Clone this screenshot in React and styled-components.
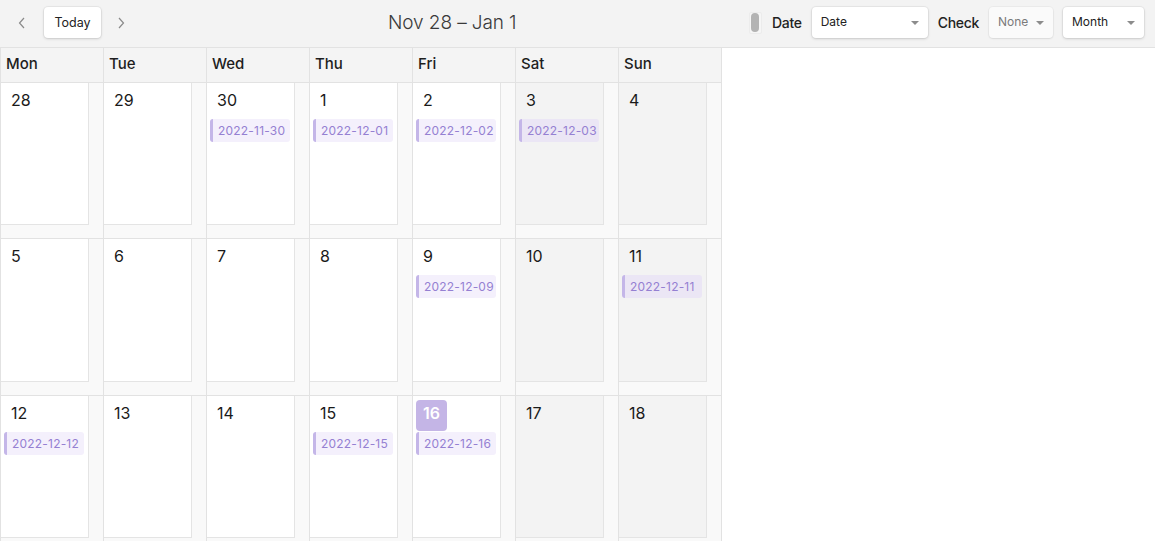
import React from 'react';
import styled, { createGlobalStyle } from 'styled-components';

const GlobalStyle = createGlobalStyle`
  html, body {
    margin: 0;
    padding: 0;
    background: #ffffff;
    font-family: Inter, "Noto Sans", "Liberation Sans", sans-serif;
    color: #1e1e1e;
  }
  body {
    height: 541px;
    overflow: hidden;
  }
`;

const weeks = [
  [
    { d: 28 }, { d: 29 }, { d: 30, ev: '2022-11-30' }, { d: 1, ev: '2022-12-01' },
    { d: 2, ev: '2022-12-02' }, { d: 3, ev: '2022-12-03' }, { d: 4 },
  ],
  [
    { d: 5 }, { d: 6 }, { d: 7 }, { d: 8 },
    { d: 9, ev: '2022-12-09' }, { d: 10 }, { d: 11, ev: '2022-12-11' },
  ],
  [
    { d: 12, ev: '2022-12-12' }, { d: 13 }, { d: 14 }, { d: 15, ev: '2022-12-15' },
    { d: 16, ev: '2022-12-16', today: true }, { d: 17 }, { d: 18 },
  ],
];

const dayNames = ['Mon', 'Tue', 'Wed', 'Thu', 'Fri', 'Sat', 'Sun'];

const App = () => (
  <>
    <GlobalStyle />
    <Page>
      <Toolbar>
        <Group>
          <ArrowBtn aria-label="prev">
            <svg width="8" height="12" viewBox="0 0 8 12">
              <path d="M6 1 L1.5 6 L6 11" fill="none" stroke="#8a8a8a" strokeWidth="1.2" />
            </svg>
          </ArrowBtn>
          <TodayBtn>Today</TodayBtn>
          <ArrowBtn aria-label="next">
            <svg width="8" height="12" viewBox="0 0 8 12">
              <path d="M2 1 L6.5 6 L2 11" fill="none" stroke="#8a8a8a" strokeWidth="1.2" />
            </svg>
          </ArrowBtn>
        </Group>
        <Title>Nov 28 – Jan 1</Title>
        <Group $right>
          <Toggle><span /></Toggle>
          <Label>Date</Label>
          <Select $w={116}>Date<Caret /></Select>
          <Label>Check</Label>
          <Select $w={64} $muted>None<Caret /></Select>
          <Select $w={81}>Month<Caret /></Select>
        </Group>
      </Toolbar>

      <Grid>
        {dayNames.map((n) => (
          <HeadCell key={n}>{n}</HeadCell>
        ))}
        {weeks.map((week, wi) =>
          week.map((day, di) => (
            <Cell key={`${wi}-${di}`}>
              <Frame $weekend={di >= 5}>
                <DayNum $today={day.today}>{day.d}</DayNum>
                {day.ev && <Event $weekend={di >= 5}>{day.ev}</Event>}
              </Frame>
            </Cell>
          ))
        )}
      </Grid>
    </Page>
  </>
);

export default App;

const Page = styled.div`
  width: 1155px;
  height: 541px;
  overflow: hidden;
`;

const Toolbar = styled.div`
  height: 48px;
  background: #f3f3f3;
  border-bottom: 1px solid #e2e2e2;
  display: flex;
  align-items: center;
  justify-content: space-between;
  padding: 0 11px 2px 10px;
  box-sizing: border-box;
`;

const Group = styled.div`
  display: flex;
  align-items: center;
  gap: ${(p) => (p.$right ? '10px' : '0')};
  width: ${(p) => (p.$right ? 'auto' : '378px')};
`;

const ArrowBtn = styled.button`
  border: none;
  background: transparent;
  width: 24px;
  height: 30px;
  display: flex;
  align-items: center;
  justify-content: center;
  padding: 0;
  margin-right: 10px;
  cursor: pointer;
`;

const TodayBtn = styled.button`
  height: 31px;
  width: 57px;
  margin-right: 8px;
  background: #ffffff;
  border: none;
  border-radius: 4px;
  box-shadow: 0 0 0 1px rgba(0, 0, 0, 0.04), 0 1px 3px rgba(0, 0, 0, 0.15);
  font-family: inherit;
  font-size: 12.5px;
  font-weight: 400;
  color: #222;
  padding: 0;
`;

const Title = styled.h2`
  margin: 0;
  font-size: 19px;
  font-weight: 300;
  color: #3a3a3a;
  flex: 1;
  letter-spacing: -0.1px;
`;

const Toggle = styled.span`
  width: 13px;
  height: 22px;
  box-sizing: border-box;
  border: 1px solid #ececec;
  background: #f6f6f6;
  border-radius: 2px;
  display: flex;
  align-items: center;
  justify-content: center;

  span {
    width: 8px;
    height: 19px;
    border-radius: 4px;
    background: #b3b3b3;
  }
`;

const Label = styled.span`
  font-size: 14px;
  font-weight: 500;
  color: #222;
  letter-spacing: -0.3px;
`;

const Select = styled.div`
  position: relative;
  width: ${(p) => p.$w}px;
  height: 31px;
  box-sizing: border-box;
  padding: 0 0 2px 9px;
  display: flex;
  align-items: center;
  font-size: 12px;
  font-weight: 400;
  color: ${(p) => (p.$muted ? '#7a7a7a' : '#222')};
  background: ${(p) => (p.$muted ? '#fafafa' : '#ffffff')};
  border-radius: 4px;
  box-shadow: ${(p) =>
    p.$muted
      ? '0 0 0 1px rgba(0,0,0,0.03), 0 1px 2px rgba(0,0,0,0.08)'
      : '0 0 0 1px rgba(0,0,0,0.04), 0 1px 3px rgba(0,0,0,0.15)'};
`;

const Caret = styled.span`
  position: absolute;
  right: 9px;
  top: 14px;
  width: 0;
  height: 0;
  border-left: 4px solid transparent;
  border-right: 4px solid transparent;
  border-top: 4px solid #8c8c8c;
`;

const Grid = styled.div`
  width: 721px;
  display: grid;
  grid-template-columns: repeat(7, 103px);
  grid-template-rows: 35px 156px 157px 156px;
  border-left: 1px solid #e2e2e2;
  box-sizing: border-box;
`;

const HeadCell = styled.div`
  background: #f4f4f4;
  border-right: 1px solid #e2e2e2;
  border-bottom: 1px solid #e2e2e2;
  display: flex;
  align-items: center;
  padding: 0 0 4px 5px;
  font-size: 15px;
  font-weight: 500;
  color: #1e1e1e;
`;

const Cell = styled.div`
  background: #f9f9f9;
  border-right: 1px solid #e2e2e2;
  border-bottom: 1px solid #e2e2e2;
  padding: 0 14px 13px 0;
  box-sizing: border-box;
  display: flex;
`;

const Frame = styled.div`
  flex: 1;
  background: ${(p) => (p.$weekend ? '#f3f3f3' : '#ffffff')};
  border-right: 1px solid #e4e4e4;
  border-bottom: 1px solid #e4e4e4;
  display: flex;
  flex-direction: column;
  align-items: flex-start;
  padding: 4px 4px 0 3px;
  gap: 1px;
`;

const DayNum = styled.span`
  height: 31px;
  line-height: 26px;
  padding: 0 7px;
  border-radius: 4px;
  font-size: 16px;
  font-weight: ${(p) => (p.$today ? 600 : 400)};
  color: ${(p) => (p.$today ? '#ffffff' : '#1a1a1a')};
  background: ${(p) => (p.$today ? '#c4b5e6' : 'transparent')};
`;

const Event = styled.div`
  align-self: stretch;
  height: 23px;
  box-sizing: border-box;
  border-left: 3px solid #c4b6e8;
  border-radius: 3px;
  background: ${(p) => (p.$weekend ? '#ebe6f5' : '#f4f0fc')};
  color: #9580d2;
  font-size: 12px;
  font-weight: 400;
  line-height: 23px;
  padding-left: 5px;
  letter-spacing: 0.2px;
  white-space: nowrap;
  overflow: hidden;
`;
